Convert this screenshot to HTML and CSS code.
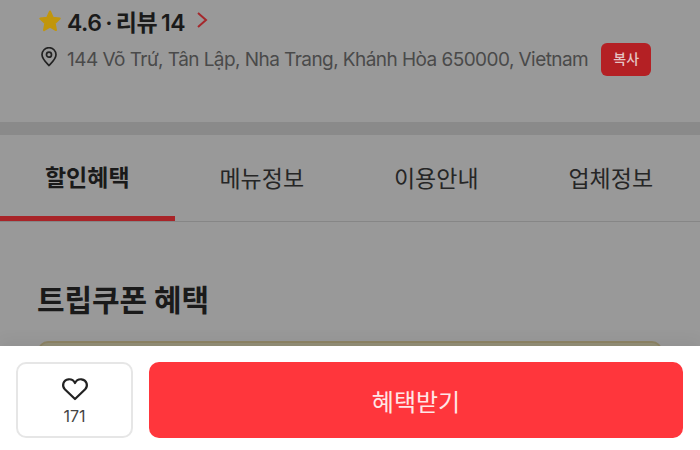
FILE: index.html
```html
<!DOCTYPE html>
<html lang="ko">

<head>
    <meta charset="UTF-8">
    <meta name="viewport" content="width=device-width, initial-scale=1.0">
    <title>트립쿠폰 혜택</title>
    <link rel="stylesheet" href="styles.css">
</head>

<body>
    <div class="page">
        <div class="content">
            <div class="info">
                <div class="rating">
                    <svg class="star" width="24" height="24" viewBox="0 0 24 24">
                        <path d="M12 2.500l2.900 6.300 6.800.8-5 4.700 1.300 6.800L12 17.700l-6 3.400 1.300-6.800-5-4.700 6.800-.8z" fill="#c1960c" stroke="#c1960c" stroke-width="2" stroke-linejoin="round"/>
                    </svg>
                    <span class="score">4.6 · 리뷰 14</span>
                    <svg class="chevron" width="12" height="18" viewBox="0 0 12 18">
                        <path d="M2 2l8 7-8 7" fill="none" stroke="#a5282c" stroke-width="2"/>
                    </svg>
                </div>
                <div class="address">
                    <svg class="pin" width="18" height="20" viewBox="0 0 18 20">
                        <path d="M9 18.5c-1-1.2-7-6.400-7-10.800a7 7 0 0 1 14 0c0 4.400-6 9.600-7 10.800z" fill="none" stroke="#222" stroke-width="1.700" stroke-linejoin="round"/>
                        <circle cx="9" cy="7.700" r="2.500" fill="none" stroke="#222" stroke-width="1.700"/>
                    </svg>
                    <span class="address-text">144 Võ Trứ, Tân Lập, Nha Trang, Khánh Hòa 650000, Vietnam</span>
                    <span class="copy">복사</span>
                </div>
            </div>
            <div class="divider"></div>
            <div class="tabs">
                <div class="tab active">할인혜택</div>
                <div class="tab">메뉴정보</div>
                <div class="tab">이용안내</div>
                <div class="tab">업체정보</div>
            </div>
            <h2 class="title">트립쿠폰 혜택</h2>
            <div class="coupon"></div>
        </div>
        <div class="bottom">
            <div class="like">
                <svg width="28" height="24" viewBox="0 0 28 24">
                    <path d="M14 22L3.800 12.200C.8 9.200 1.800 3 7.500 2.300 10.500 2 12.800 3.600 14 6c1.200-2.400 3.500-4 6.500-3.700 5.700.7 6.700 6.900 3.700 9.900z" fill="none" stroke="#222" stroke-width="2.200" stroke-linejoin="round"/>
                </svg>
                <span class="like-count">171</span>
            </div>
            <div class="cta">혜택받기</div>
        </div>
    </div>
</body>

</html>
```

FILE: styles.css
```css
body {
    margin: 0;
    font-family: 'Inter', 'Noto Sans CJK KR', sans-serif;
    background-color: #999999;
}

.page {
    display: flex;
    flex-direction: column;
    width: 700px;
    height: 450px;
    overflow: hidden;
}

.content {
    height: 346px;
    overflow: hidden;
    flex-shrink: 0;
}

.info {
    height: 122px;
    padding: 9px 0 0 38px;
    box-sizing: border-box;
}

.rating {
    display: flex;
    align-items: center;
    height: 24px;
}

.score {
    margin-left: 5px;
    font-size: 23px;
    font-weight: 600;
    letter-spacing: -0.5px;
    word-spacing: -1.5px;
    color: #1a1a1a;
}

.chevron {
    margin-left: 11px;
    margin-top: -2px;
}

.address {
    display: flex;
    align-items: center;
    height: 34px;
    margin-top: 9px;
}

.pin {
    margin-left: 2px;
    margin-top: -4px;
}

.address-text {
    margin-left: 9px;
    font-size: 19px;
    letter-spacing: -0.56px;
    color: #4a4a4a;
}

.copy {
    margin-left: 13px;
    width: 50px;
    height: 33px;
    line-height: 31px;
    text-align: center;
    font-size: 14px;
    font-weight: 500;
    color: #e6c4c4;
    background-color: #b42024;
    border-radius: 6px;
}

.divider {
    height: 13px;
    background-color: #8a8a8a;
}

.tabs {
    display: flex;
    height: 87px;
    padding-right: 2px;
    border-bottom: 1px solid #868686;
    box-sizing: border-box;
}

.tab {
    flex: 1;
    display: flex;
    align-items: center;
    justify-content: center;
    height: 84px;
    font-size: 23px;
    color: #262626;
}

.tab.active {
    height: 81px;
    font-weight: 700;
    color: #1a1a1a;
    border-bottom: 5px solid #a82428;
}

.title {
    margin: 58px 0 0 37px;
    height: 40px;
    line-height: 40px;
    font-size: 30px;
    font-weight: 700;
    letter-spacing: -0.1px;
    color: #1a1a1a;
}

.coupon {
    height: 30px;
    margin: 21px 38px 0;
    box-sizing: border-box;
    background-color: #949078;
    border: 2px solid #8e8566;
    border-radius: 10px;
}

.bottom {
    flex: 1;
    display: flex;
    gap: 16px;
    padding: 16px 17px 12px 16px;
    background-color: #ffffff;
    box-shadow: 0 -6px 14px rgba(0, 0, 0, 0.05);
}

.like {
    display: flex;
    flex-direction: column;
    align-items: center;
    justify-content: center;
    width: 117px;
    padding-top: 2px;
    box-sizing: border-box;
    border: 2px solid #e6e6e6;
    border-radius: 10px;
}

.like-count {
    margin-top: 5px;
    font-size: 16px;
    color: #444444;
}

.cta {
    flex: 1;
    display: flex;
    align-items: center;
    justify-content: center;
    font-size: 24px;
    color: #ffe6e6;
    background-color: #ff363c;
    border-radius: 10px;
}
```
